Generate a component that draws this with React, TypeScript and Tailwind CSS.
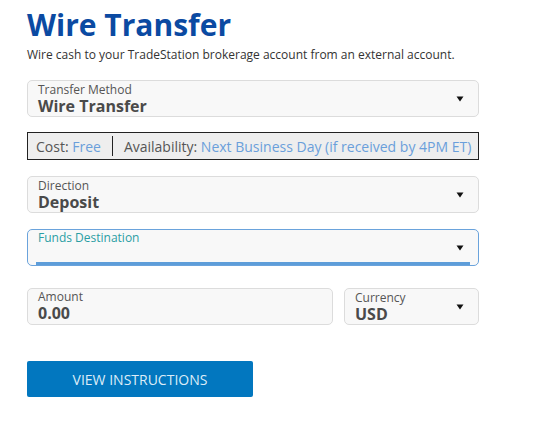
function Caret() {
  return (
    <svg width="8" height="6" viewBox="0 0 8 6" className="shrink-0">
      <path d="M0.5 0.5 H7.5 L4 5.5 Z" fill="#111" />
    </svg>
  );
}

function SelectField({ label, value }: { label: string; value: string }) {
  return (
    <div className="flex h-[37px] items-center rounded-[5px] border border-[#dcdcdc] bg-[#f8f8f8] pl-[10px] pr-[14px]">
      <div className="flex flex-1 flex-col">
        <span className="text-[12px] leading-[15px] text-[#555]">{label}</span>
        <span className="text-[16px] font-bold leading-[18px] text-[#4a4a4a]">{value}</span>
      </div>
      <Caret />
    </div>
  );
}

export default function App() {
  return (
    <div
      className="min-h-[424px] w-full bg-white px-[27px] pt-[5px]"
      style={{ fontFamily: '"Open Sans", sans-serif' }}
    >
      <div className="w-[452px]">
        <h1 className="text-[30px] font-bold leading-[40px] text-[#0b4aa2]">Wire Transfer</h1>
        <p className="mt-[2px] text-[12px] leading-[16px] text-[#333]">
          Wire cash to your TradeStation brokerage account from an external account.
        </p>

        <div className="mt-[17px]">
          <SelectField label="Transfer Method" value="Wire Transfer" />
        </div>

        {/* cost / availability strip */}
        <div className="mt-[15px] flex h-[28px] items-center border border-[#222] bg-[#eeeeee] text-[14px] text-[#555]">
          <div className="pl-[8px] pr-[11px]">
            Cost: <span className="text-[#6a9fdb]">Free</span>
          </div>
          <div className="h-[20px] w-px bg-[#222]" />
          <div className="pl-[11px]">
            Availability: <span className="text-[#6a9fdb]">Next Business Day (if received by 4PM ET)</span>
          </div>
        </div>

        <div className="mt-[16px]">
          <SelectField label="Direction" value="Deposit" />
        </div>

        {/* focused select */}
        <div className="relative mt-[16px] flex h-[37px] items-center rounded-[5px] border border-[#6aa3dc] bg-[#f8f8f8] pl-[10px] pr-[14px]">
          <div className="flex flex-1 flex-col self-start">
            <span className="text-[12px] leading-[15px] text-[#2a9ea4]">Funds Destination</span>
          </div>
          <Caret />
          <div className="absolute bottom-0 left-[8px] right-[8px] h-[3px] bg-[#5d9dd9]" />
        </div>

        <div className="mt-[22px] flex gap-[11px]">
          <div className="flex h-[37px] flex-1 flex-col rounded-[5px] border border-[#dcdcdc] bg-[#f8f8f8] pl-[10px]">
            <span className="text-[12px] leading-[15px] text-[#555]">Amount</span>
            <span className="text-[16px] font-bold leading-[18px] text-[#4a4a4a]">0.00</span>
          </div>
          <div className="w-[135px]">
            <SelectField label="Currency" value="USD" />
          </div>
        </div>

        <button className="mt-[36px] h-[36px] w-[226px] rounded-[2px] bg-[#0277bf] text-[14px] text-[#dcecf8]">
          VIEW INSTRUCTIONS
        </button>
      </div>
    </div>
  );
}
